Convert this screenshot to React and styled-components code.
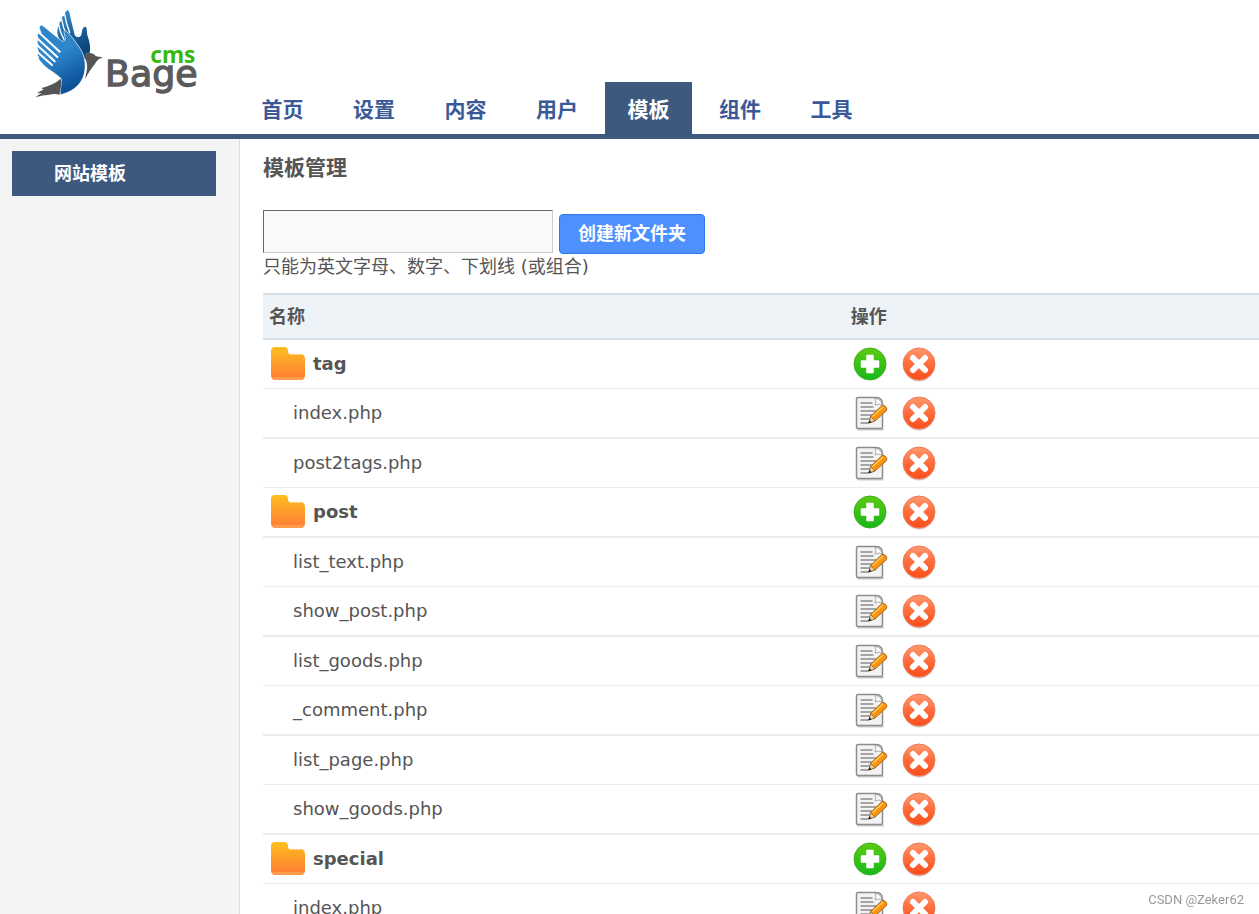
import { useState } from 'react'
import styled, { createGlobalStyle, css } from 'styled-components'

const GlobalStyle = createGlobalStyle`
	* {
		box-sizing: border-box;
	}

	body {
		margin: 0;
		background: #fff;
		color: #555;
		font-family: 'DejaVu Sans', 'Noto Sans CJK SC', sans-serif;
		font-size: 18px;
		line-height: 24px;
	}
`

const Page = styled.div`
	display: flex;
	flex-direction: column;
	height: 100vh;
	overflow: hidden;
`

const Header = styled.header`
	display: flex;
	flex: none;
	align-items: flex-end;
	border-bottom: 5px solid #3d5980;
`

const Brand = styled.a`
	flex: none;
	width: 239px;
	height: 134px;
	padding-left: 20px;

	svg {
		display: block;
	}
`

const Nav = styled.nav`
	display: flex;
	justify-content: space-between;
	width: 636px;
`

const NavLink = styled.a`
	width: 87px;
	padding: 14px 0 10px;
	color: #3b5998;
	font-size: 21px;
	font-weight: bold;
	line-height: 28px;
	text-align: center;
	text-decoration: none;

	${({ $active }) =>
		$active &&
		css`
			background: #3d5980;
			color: #fff;
		`}
`

const Body = styled.div`
	display: flex;
	flex: 1;
	min-height: 0;
`

const Sidebar = styled.aside`
	flex: none;
	width: 240px;
	padding: 12px 23px 12px 12px;
	border-right: 1px solid #ddd;
	background: #f4f4f4;
`

const SideLink = styled.a`
	display: block;
	padding: 11px 42px 10px;
	background: #3d5980;
	color: #fff;
	font-weight: bold;
	text-decoration: none;
`

const Main = styled.main`
	flex: 1;
	min-width: 0;
	padding-left: 23px;
	overflow: hidden;
`

const Title = styled.h1`
	margin: 0;
	padding: 15px 0 28px;
	font-size: 21px;
	line-height: 28px;
`

const FolderForm = styled.form`
	display: flex;
	align-items: flex-end;
	gap: 6px;
`

const FolderInput = styled.input`
	width: 290px;
	height: 43px;
	margin-bottom: 1px;
	padding: 6px;
	border: 1px solid;
	border-color: #666 #ccc #ccc #666;
	background: #f9f9f9;
	color: #555;
	font: inherit;
`

const CreateButton = styled.button`
	height: 40px;
	padding: 0 18px;
	border: 1px solid #3079ed;
	border-radius: 4px;
	background: #4d90fe;
	color: #fff;
	font: inherit;
	font-weight: bold;
`

const Hint = styled.label`
	display: block;
	padding: 1px 0 14px;
`

const Table = styled.table`
	width: 100%;
	border-spacing: 0;
	table-layout: fixed;
`

const HeadCell = styled.th`
	width: ${({ $width }) => $width || 'auto'};
	height: 47px;
	padding: 1px 6px 0;
	border: solid #d5dfe8;
	border-width: 2px 0;
	background: #edf3f7;
	text-align: left;
`

const Row = styled.tr`
	td {
		height: 49px;
		padding: 0 6px;
		border-bottom: 1px solid #ececec;
	}

	&:nth-child(even) td {
		height: 50px;
		border-bottom-width: 2px;
	}
`

const FolderName = styled.div`
	display: flex;
	align-items: center;
	gap: 6px;
	font-weight: bold;
`

const FileName = styled.div`
	padding-left: 24px;
`

const Actions = styled.div`
	display: flex;
	gap: 11px;
`

const IconButton = styled.button`
	width: 38px;
	height: 38px;
	padding: 0;
	border: 0;
	background: none;
	cursor: pointer;

	svg {
		display: block;
	}
`

const Watermark = styled.span`
	position: fixed;
	right: 15px;
	bottom: 6px;
	color: #999;
	font-family: Roboto, 'Liberation Sans', sans-serif;
	font-size: 13px;
	line-height: 16px;
`

const Logo = () => (
	<svg width='200' height='110' viewBox='0 0 600 330' role='img' aria-label='Bage cms'>
		<defs>
			<linearGradient id='wingFront' x1='0' y1='0' x2='0.4' y2='1'>
				<stop offset='0' stopColor='#2b83c9' />
				<stop offset='0.5' stopColor='#2e86cb' />
				<stop offset='1' stopColor='#0b5299' />
			</linearGradient>
			<linearGradient id='wingBack' x1='0' y1='0' x2='0.5' y2='1'>
				<stop offset='0' stopColor='#3a8fd0' />
				<stop offset='1' stopColor='#0a447c' />
			</linearGradient>
		</defs>
		<path
			d='M143 31C149 34 150 46 153 60L164 104C168 113 179 115 184 104C187 94 185 84 195 80C203 79 199 96 203 108C208 124 213 142 209 158C200 158 196 164 193 171L160 158L123 126C113 111 110 98 113 86C115 77 117 80 118 73C119 63 123 67 125 57C126 47 131 51 134 43C136 35 140 30 143 31Z'
			fill='url(#wingBack)'
		/>
		<g fill='none' stroke='#fff' strokeWidth='4' strokeLinecap='round'>
			<path d='M134 43C137 62 142 80 149 98' />
			<path d='M125 58C128 77 133 92 141 108' />
			<path d='M117 76C119 92 125 105 132 118' />
		</g>
		<path
			d='M61 77C66 74 71 79 78 85L124 122C137 128 138 116 134 105C130 95 132 88 139 94C153 107 166 124 176 139C190 159 198 181 195 208C192 246 163 276 121 284C118 263 129 250 123 236C113 223 80 207 68 192C61 184 54 177 56 171C49 164 54 158 55 153C51 146 52 139 54 134C50 126 52 119 55 115C50 106 53 101 56 99L64 98C59 90 56 79 61 77Z'
			fill='url(#wingFront)'
			stroke='#fff'
			strokeWidth='2'
		/>
		<g fill='none' stroke='#fff' strokeWidth='6' strokeLinecap='round'>
			<path d='M56 97L119 155' />
			<path d='M53 116L112 171' />
			<path d='M52 136L104 184' />
			<path d='M53 157L96 195' />
		</g>
		<path
			d='M194 164C204 156 221 159 226 167C233 171 242 169 249 172C238 175 231 181 226 190C216 204 204 218 196 237C198 219 203 207 201 195C200 184 197 177 193 174Z'
			fill='#555'
		/>
		<path
			d='M122 236C129 249 120 263 119 284C107 281 96 282 84 285C70 286 59 288 46 292C53 286 60 282 66 279L51 280C58 273 66 273 71 267L63 265C83 258 105 252 122 236Z'
			fill='#555'
		/>
		<text x='255' y='259' fill='#5b5b5b' stroke='#5b5b5b' strokeWidth='4' fontFamily='DejaVu Sans' fontSize='109'>
			Bage
		</text>
		<text x='391' y='188' fill='#36b90c' fontFamily='Noto Sans' fontWeight='700' fontSize='68'>
			cms
		</text>
	</svg>
)

const FolderIcon = () => (
	<svg width='38' height='38' viewBox='0 0 38 38' aria-hidden='true'>
		<defs>
			<linearGradient id='folder' x1='0' y1='0' x2='0' y2='1'>
				<stop offset='0' stopColor='#fdbf20' />
				<stop offset='1' stopColor='#ff7a35' />
			</linearGradient>
		</defs>
		<path
			d='M6 2h9q4 0 4 4v1q0 2 2 2h10q5 0 5 5v16q0 5-5 5H7q-5 0-5-5V6q0-4 4-4z'
			fill='url(#folder)'
		/>
		<path d='M20 9.500h12' stroke='#ffcf78' />
		<path d='M2.500 32q1 3 4.500 3h24q3.500 0 4.500-3z' fill='#ff9c4c' />
	</svg>
)

const AddIcon = () => (
	<svg width='38' height='38' viewBox='0 0 38 38' aria-hidden='true'>
		<defs>
			<linearGradient id='add' x1='0' y1='0' x2='0' y2='1'>
				<stop offset='0' stopColor='#5ccb10' />
				<stop offset='1' stopColor='#18b81c' />
			</linearGradient>
		</defs>
		<circle cx='19' cy='19' r='16' fill='url(#add)' stroke='#3fae22' />
		<path
			d='M16 10.500h6v5.500h5.500v6H22v5.500h-6V22h-5.500v-6H16z'
			fill='#fff'
			stroke='#fff'
			strokeWidth='1.500'
			strokeLinejoin='round'
		/>
	</svg>
)

const DeleteIcon = () => (
	<svg width='38' height='38' viewBox='0 0 38 38' aria-hidden='true'>
		<defs>
			<linearGradient id='delete' x1='0' y1='0' x2='0' y2='1'>
				<stop offset='0' stopColor='#ff9a70' />
				<stop offset='0.45' stopColor='#ff7040' />
				<stop offset='1' stopColor='#fb4d18' />
			</linearGradient>
		</defs>
		<ellipse cx='19' cy='20.500' rx='15.500' ry='16' fill='#d9c8c2' />
		<circle cx='19' cy='19' r='16' fill='url(#delete)' stroke='#ec7a55' />
		<path d='M13 13l12 12M25 13L13 25' stroke='#fff' strokeWidth='6' strokeLinecap='round' />
	</svg>
)

const EditIcon = () => (
	<svg width='38' height='38' viewBox='0 0 38 38' aria-hidden='true'>
		<path d='M7 35.500h25' stroke='#ccc' strokeWidth='2' strokeLinecap='round' />
		<path
			d='M7 3.500h18q6.500 0 6.500 7V33q0 1.500-1.500 1.500H7Q5.500 34.500 5.500 33V5Q5.500 3.500 7 3.500z'
			fill='#f3f3f3'
			stroke='#8c8c8c'
			strokeWidth='1.500'
		/>
		<path d='M24 4.500q2 3 0 6.500q4-2 7 0q-.5-4.500-4-6z' fill='#fff' stroke='#aaa' />
		<path
			d='M9.500 9h12M9.500 13h13M9.500 17h16M9.500 21h13M9.500 25h11M9.500 29h8'
			stroke='#8c8c8c'
			strokeWidth='1.500'
		/>
		<path
			d='M19 28.500l.5-6L30.500 12q2-1.500 4 .5t1 4L24 27z'
			fill='#f8940e'
			stroke='#a8651a'
		/>
		<path d='M21.500 22.500L32 13' stroke='#ffc85a' strokeWidth='1.500' />
		<path d='M19.500 22.500l4.500 4.500l-6 2z' fill='#e8cda0' stroke='#80602f' strokeWidth='.7' />
		<path d='M18.500 26l2 2.500l-3.500 1z' fill='#222' />
	</svg>
)

const NAV = ['首页', '设置', '内容', '用户', '模板', '组件', '工具']

const ENTRIES = [
	{ name: 'tag', folder: true },
	{ name: 'index.php' },
	{ name: 'post2tags.php' },
	{ name: 'post', folder: true },
	{ name: 'list_text.php' },
	{ name: 'show_post.php' },
	{ name: 'list_goods.php' },
	{ name: '_comment.php' },
	{ name: 'list_page.php' },
	{ name: 'show_goods.php' },
	{ name: 'special', folder: true },
	{ name: 'index.php' },
]

const Entry = ({ name, folder }) => (
	<Row>
		<td>
			{folder ? (
				<FolderName>
					<FolderIcon />
					{name}
				</FolderName>
			) : (
				<FileName>{name}</FileName>
			)}
		</td>
		<td>
			<Actions>
				<IconButton type='button' aria-label={folder ? '添加' : '编辑'}>
					{folder ? <AddIcon /> : <EditIcon />}
				</IconButton>
				<IconButton type='button' aria-label='删除'>
					<DeleteIcon />
				</IconButton>
			</Actions>
		</td>
	</Row>
)

const App = () => {
	const [folderName, setFolderName] = useState('')

	return (
		<Page>
			<GlobalStyle />
			<Header>
				<Brand href='#'>
					<Logo />
				</Brand>
				<Nav>
					{NAV.map((item) => (
						<NavLink key={item} href='#' $active={item === '模板'}>
							{item}
						</NavLink>
					))}
				</Nav>
			</Header>
			<Body>
				<Sidebar>
					<SideLink href='#'>网站模板</SideLink>
				</Sidebar>
				<Main>
					<Title>模板管理</Title>
					<FolderForm onSubmit={(e) => e.preventDefault()}>
						<FolderInput
							id='folderName'
							type='text'
							value={folderName}
							onChange={(e) => setFolderName(e.target.value)}
						/>
						<CreateButton type='submit'>创建新文件夹</CreateButton>
					</FolderForm>
					<Hint htmlFor='folderName'>只能为英文字母、数字、下划线 (或组合)</Hint>
					<Table>
						<thead>
							<tr>
								<HeadCell $width='58.4%'>名称</HeadCell>
								<HeadCell>操作</HeadCell>
							</tr>
						</thead>
						<tbody>
							{ENTRIES.map((entry, index) => (
								<Entry key={index} {...entry} />
							))}
						</tbody>
					</Table>
				</Main>
			</Body>
			<Watermark>CSDN @Zeker62</Watermark>
		</Page>
	)
}

export default App
